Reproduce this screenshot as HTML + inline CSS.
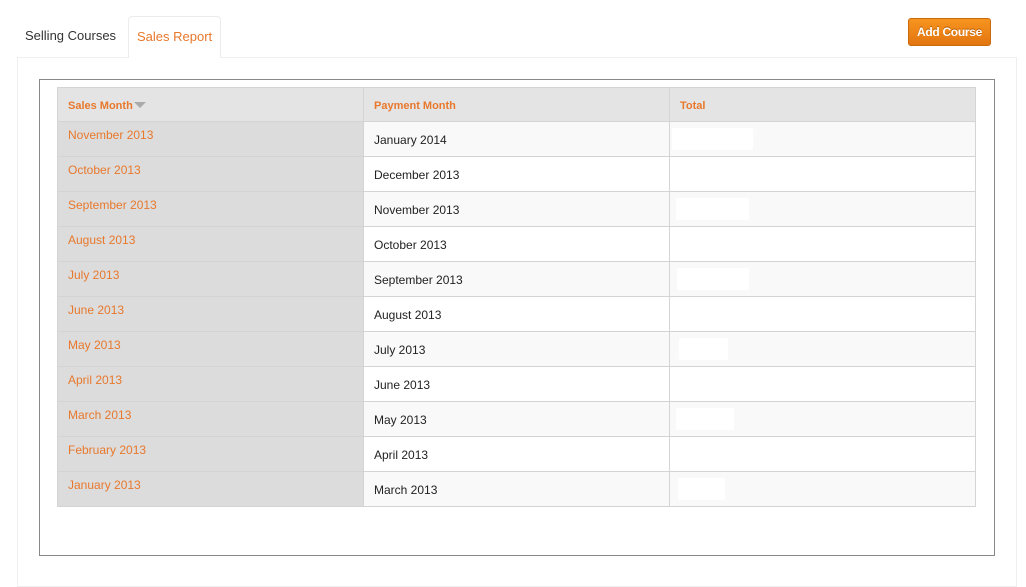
<!DOCTYPE html>
<html><head><meta charset="utf-8"><style>
*{margin:0;padding:0;box-sizing:border-box}
body{width:1026px;height:573px;background:#fff;font-family:"Liberation Sans",Helvetica,Arial,sans-serif;position:relative;overflow:hidden}
.a{position:absolute}
.tab1{left:25px;top:28px;font-size:13px;color:#333}
.tab2{left:128px;top:16px;width:93px;height:42px;border:1px solid #ececec;border-bottom:none;border-radius:4px 4px 0 0;background:#fff;color:#e8782c;font-size:13px;padding:12px 0 0 8px;z-index:2}
.panel{left:17px;top:57px;width:1000px;height:530px;border:1px solid #efefef}
.btn{left:908px;top:18px;width:83px;height:28px;border:1px solid #c96a0c;border-radius:3px;background:linear-gradient(#f7941f,#e27510);color:#fff;font-weight:bold;font-size:12px;text-align:center;line-height:26px;text-shadow:0 -1px 0 #b35a00;letter-spacing:-0.3px}
.box{left:39px;top:79px;width:956px;height:477px;border:1px solid #888}
.hdr{top:87px;height:35px;background:#e4e4e4;border:1px solid #d4d4d4;font-size:11px;font-weight:bold;color:#e8782c;padding:12px 0 0 10px}
.c1{background:#dcdcdc}
.cell{height:35px;border:1px solid #d4d4d4;border-top:none;font-size:12px}
.s{color:#e8782c;padding:6px 0 0 10px}
.p{color:#222;padding:11px 0 0 10px}
.w{background:#fff;border-radius:2px}
</style></head><body>
<div class="a panel"></div>
<div class="a tab1">Selling Courses</div>
<div class="a tab2">Sales Report</div>
<div class="a btn">Add Course</div>
<div class="a box"></div>
<div class="a hdr" style="left:57px;width:307px">Sales Month<span style="display:inline-block;width:0;height:0;border-left:6px solid transparent;border-right:6px solid transparent;border-top:6px solid #aaa;margin-left:1px;vertical-align:1px"></span></div>
<div class="a hdr" style="left:363px;width:307px">Payment Month</div>
<div class="a hdr" style="left:669px;width:307px">Total</div>
<div id="rows"></div>
<script>
var s=["November 2013","October 2013","September 2013","August 2013","July 2013","June 2013","May 2013","April 2013","March 2013","February 2013","January 2013"];
var p=["January 2014","December 2013","November 2013","October 2013","September 2013","August 2013","July 2013","June 2013","May 2013","April 2013","March 2013"];
var bw={0:[672,81],2:[676,73],4:[677,72],6:[679,49],8:[676,58],10:[678,47]};
var h="";
for(var i=0;i<11;i++){var t=122+35*i;var bg=i%2==0?"#f9f9f9":"#fff";
h+='<div class="a cell c1 s" style="left:57px;top:'+t+'px;width:307px">'+s[i]+'</div>';
h+='<div class="a cell p" style="left:363px;top:'+t+'px;width:307px;background:'+bg+'">'+p[i]+'</div>';
h+='<div class="a cell" style="left:669px;top:'+t+'px;width:307px;background:'+bg+'"></div>';
if(bw[i])h+='<div class="a w" style="left:'+bw[i][0]+'px;top:'+(t+6)+'px;width:'+bw[i][1]+'px;height:22px"></div>';}
document.getElementById("rows").innerHTML=h;
</script>
</body></html>
